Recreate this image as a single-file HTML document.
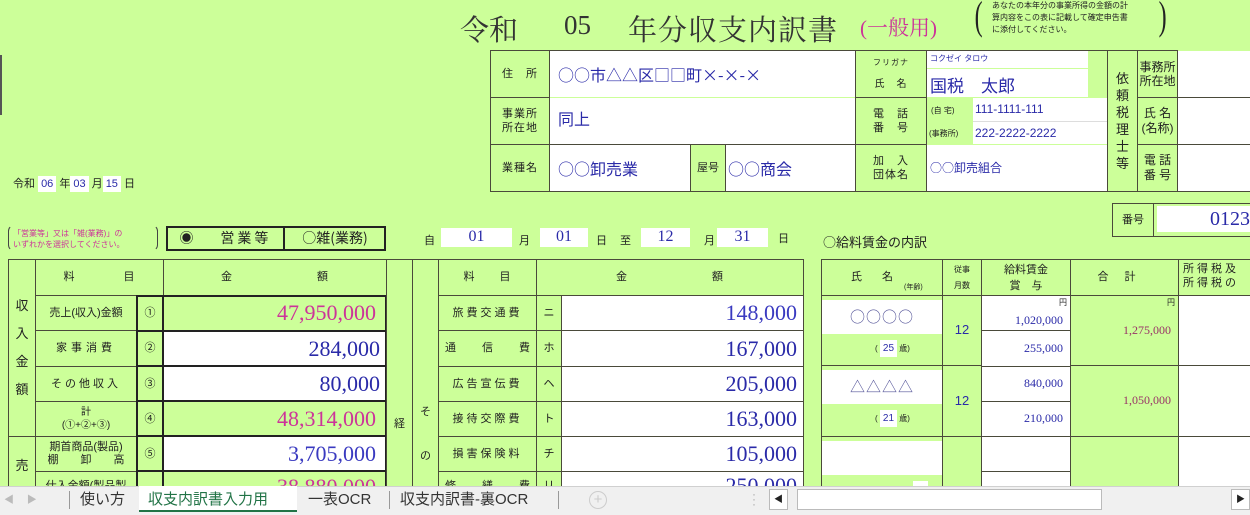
<!DOCTYPE html>
<html><head><meta charset="utf-8">
<style>
*{margin:0;padding:0;box-sizing:border-box}
body{width:1250px;height:515px;overflow:hidden;background:#ccff99;position:relative;font-family:"Liberation Sans","Noto Sans CJK JP",sans-serif;color:#222}
.a{position:absolute}
.c{position:absolute;display:flex;align-items:center;justify-content:center;text-align:center;line-height:1.15}
.b{border:1px solid #4a4a3a}
.w{background:#fff}
.s{font-size:11px}
.v{color:#2a2aa8}
.p{color:#cc3399}
.j{font-family:"Noto Sans CJK JP",sans-serif}
.n{font-family:"Liberation Serif",serif;font-size:22px;justify-content:flex-end;padding-right:6px}
.lbl{font-size:11px;letter-spacing:1px}
</style></head><body>
<div class="a" style="left:0;top:55px;width:2px;height:60px;background:#555"></div>
<!-- title -->
<div class="a" style="left:460px;top:8px;font-family:'Liberation Serif','Noto Serif CJK SC',serif;font-size:29px;color:#333;white-space:nowrap">令和</div>
<div class="a" style="left:564px;top:10px;font-family:'Liberation Serif',serif;font-size:27px;color:#333">05</div>
<div class="a" style="left:628px;top:8px;font-family:'Liberation Serif','Noto Serif CJK SC',serif;font-size:29px;color:#333;letter-spacing:1px;white-space:nowrap">年分収支内訳書</div>
<div class="a p" style="left:860px;top:12px;font-family:'Liberation Serif','Noto Serif CJK SC',serif;font-size:21px;white-space:nowrap">(一般用)</div>
<div class="a" style="left:972px;top:-8px;font-size:40px;transform:scaleX(0.6);color:#222;font-family:'Liberation Serif',serif">(</div>
<div class="a" style="left:1156px;top:-8px;font-size:40px;transform:scaleX(0.6);color:#222;font-family:'Liberation Serif',serif">)</div>
<div class="a" style="left:992px;top:0px;font-size:8px;line-height:12px;color:#222;white-space:nowrap">あなたの本年分の事業所得の金額の計<br>算内容をこの表に記載して確定申告書<br>に添付してください。</div>

<!-- top table -->
<div class="c b lbl" style="left:490px;top:50px;width:60px;height:48px">住　所</div>
<div class="a w" style="left:550px;top:51px;width:306px;height:46px"></div>
<div class="c v j" style="left:558px;top:51px;height:46px;font-size:16px">○○市△△区□□町×-×-×</div>
<div class="c b lbl" style="left:490px;top:97px;width:60px;height:48px;line-height:14px">事業所<br>所在地</div>
<div class="a w" style="left:550px;top:98px;width:306px;height:46px"></div>
<div class="c v" style="left:558px;top:98px;height:46px;font-size:16px">同上</div>
<div class="c b lbl" style="left:490px;top:144px;width:60px;height:48px">業種名</div>
<div class="a w b" style="left:549px;top:144px;width:142px;height:48px"></div>
<div class="c v j" style="left:558px;top:145px;height:46px;font-size:16px">○○卸売業</div>
<div class="c b s" style="left:690px;top:144px;width:36px;height:48px">屋号</div>
<div class="a w b" style="left:725px;top:144px;width:131px;height:48px"></div>
<div class="c v j" style="left:728px;top:145px;height:46px;font-size:16px">○○商会</div>
<div class="a b" style="left:490px;top:50px;width:366px;height:142px;border-width:1px"></div>

<div class="c b lbl" style="left:855px;top:50px;width:72px;height:48px;flex-direction:column;font-size:10px;line-height:22px"><span style="font-size:8px">フリガナ</span>氏　名</div>
<div class="a w" style="left:927px;top:51px;width:161px;height:46px"></div>
<div class="a" style="left:927px;top:68px;width:161px;height:1px;background:#ccff99"></div>
<div class="a v" style="left:930px;top:53px;font-size:8px">コクゼイ タロウ</div>
<div class="a v" style="left:930px;top:72px;font-size:17px">国税　太郎</div>
<div class="c b lbl" style="left:855px;top:97px;width:72px;height:48px;line-height:14px">電　話<br>番　号</div>
<div class="a w" style="left:927px;top:98px;width:181px;height:46px"></div>
<div class="a" style="left:927px;top:98px;width:46px;height:46px;background:#ccff99"></div>
<div class="a" style="left:973px;top:121px;width:135px;height:1px;background:#ddd"></div>
<div class="a" style="left:931px;top:105px;font-size:8px">(自 宅)</div>
<div class="a" style="left:929px;top:128px;font-size:8px">(事務所)</div>
<div class="a v" style="left:975px;top:102px;font-size:12px">111-1111-111</div>
<div class="a v" style="left:975px;top:126px;font-size:12px">222-2222-2222</div>
<div class="c b lbl" style="left:855px;top:144px;width:72px;height:48px;line-height:14px">加　入<br>団体名</div>
<div class="a w" style="left:927px;top:145px;width:181px;height:46px"></div>
<div class="c v j" style="left:930px;top:145px;height:46px;font-size:12px">○○卸売組合</div>
<div class="a b" style="left:855px;top:50px;width:253px;height:142px"></div>
<div class="c b" style="left:1107px;top:50px;width:31px;height:142px;font-size:13px;line-height:17px">依<br>頼<br>税<br>理<br>士<br>等</div>
<div class="c b s" style="left:1137px;top:50px;width:41px;height:48px;line-height:14px;font-size:12px">事務所<br>所在地</div>
<div class="c b s" style="left:1137px;top:97px;width:41px;height:48px;line-height:15px;font-size:12px">氏 名<br>(名称)</div>
<div class="c b s" style="left:1137px;top:144px;width:41px;height:48px;line-height:15px;font-size:12px">電 話<br>番 号</div>
<div class="a w" style="left:1178px;top:51px;width:72px;height:140px"></div>
<div class="a" style="left:1178px;top:97px;width:72px;height:1px;background:#4a4a3a"></div>
<div class="a" style="left:1178px;top:144px;width:72px;height:1px;background:#4a4a3a"></div>
<div class="a" style="left:1108px;top:191px;width:142px;height:1px;background:#4a4a3a"></div>

<!-- date -->
<div class="a" style="left:13px;top:175px;font-size:11px;white-space:nowrap">令和 <span class="w v" style="padding:2px 3px">06</span> 年<span class="w v" style="padding:2px 3px">03</span> 月<span class="w v" style="padding:2px 3px">15</span> 日</div>

<!-- number -->
<div class="c b s" style="left:1112px;top:203px;width:42px;height:34px">番号</div>
<div class="a b" style="left:1112px;top:203px;width:140px;height:34px"></div>
<div class="c w v" style="left:1157px;top:206px;width:93px;height:26px;font-family:'Liberation Serif',serif;font-size:20px;justify-content:flex-end">0123</div>

<!-- radio row -->
<div class="a" style="left:8px;top:225px;width:150px;height:26px;border:1px solid #444;border-radius:6px;border-top-color:transparent;border-bottom-color:transparent"></div>
<div class="a p" style="left:13px;top:228px;font-size:8px;line-height:11px;white-space:nowrap">「営業等」又は「雑(業務)」の<br>いずれかを選択してください。</div>
<div class="a" style="left:166px;top:226px;width:220px;height:25px;border:2px solid #222"></div>
<div class="a" style="left:283px;top:226px;width:2px;height:25px;background:#222"></div>
<div class="c" style="left:168px;top:227px;width:115px;height:23px;font-size:14px;letter-spacing:3px">◉ 　営業等</div>
<div class="c j" style="left:285px;top:227px;width:100px;height:23px;font-size:14px">○雑(業務)</div>
<div class="a s" style="left:424px;top:232px">自</div>
<div class="c w v" style="left:441px;top:228px;width:71px;height:19px;font-family:'Liberation Serif',serif;font-size:16px">01</div>
<div class="a s" style="left:519px;top:232px">月</div>
<div class="c w v" style="left:540px;top:228px;width:48px;height:19px;font-family:'Liberation Serif',serif;font-size:16px">01</div>
<div class="a s" style="left:596px;top:232px">日</div>
<div class="a s" style="left:620px;top:232px">至</div>
<div class="c w v" style="left:641px;top:228px;width:49px;height:19px;font-family:'Liberation Serif',serif;font-size:16px">12</div>
<div class="a s" style="left:704px;top:232px">月</div>
<div class="c w v" style="left:717px;top:228px;width:51px;height:19px;font-family:'Liberation Serif',serif;font-size:16px">31</div>
<div class="a s" style="left:778px;top:230px">日</div>
<div class="a j" style="left:823px;top:232px;font-size:13px">○給料賃金の内訳</div>

<!-- left main table -->
<div class="c b" style="left:8px;top:259px;width:28px;height:178px;font-size:13px;line-height:28px">収<br>入<br>金<br>額</div>
<div class="c b" style="left:8px;top:436px;width:28px;height:60px;font-size:13px">売</div>
<div class="c b lbl" style="left:35px;top:259px;width:129px;height:37px;word-spacing:40px">料　　　　目</div>
<div class="c b lbl" style="left:163px;top:259px;width:224px;height:37px">金　　　　　　　額</div>
<div class="c b s" style="left:35px;top:295px;width:102px;height:36px">売上(収入)金額</div>
<div class="c b s" style="left:35px;top:330px;width:102px;height:37px;letter-spacing:4px">家事消費</div>
<div class="c b s" style="left:35px;top:366px;width:102px;height:36px;letter-spacing:3px">その他収入</div>
<div class="c b s" style="left:35px;top:401px;width:102px;height:36px;line-height:13px;font-size:10px">計<br>(①+②+③)</div>
<div class="c b s" style="left:35px;top:436px;width:102px;height:36px;line-height:13px">期首商品(製品)<br>棚　　卸　　高</div>
<div class="c b s" style="left:35px;top:471px;width:102px;height:30px">仕入金額(製品製</div>
<div class="c s" style="left:137px;top:296px;width:26px;height:34px">①</div>
<div class="c s" style="left:137px;top:331px;width:26px;height:35px">②</div>
<div class="c s" style="left:137px;top:367px;width:26px;height:34px">③</div>
<div class="c s" style="left:137px;top:402px;width:26px;height:34px">④</div>
<div class="c s" style="left:137px;top:437px;width:26px;height:34px">⑤</div>
<div class="c n p" style="left:163px;top:296px;width:223px;height:34px;padding-right:10px">47,950,000</div>
<div class="c n v w" style="left:163px;top:331px;width:223px;height:35px">284,000</div>
<div class="c n v w" style="left:163px;top:367px;width:223px;height:34px">80,000</div>
<div class="c n p" style="left:163px;top:402px;width:223px;height:34px;padding-right:10px">48,314,000</div>
<div class="c n v w" style="left:163px;top:437px;width:223px;height:34px;color:#3a3ac0;padding-right:10px">3,705,000</div>
<div class="c n p" style="left:163px;top:472px;width:223px;height:30px;padding-right:10px">38,880,000</div>
<div class="a" style="left:136px;top:295px;width:251px;height:210px;border:2px solid #222;border-bottom:none"></div>
<div class="a" style="left:162px;top:295px;width:2px;height:210px;background:#222"></div>
<div class="a" style="left:136px;top:330px;width:251px;height:2px;background:#222"></div>
<div class="a" style="left:136px;top:365px;width:251px;height:2px;background:#222"></div>
<div class="a" style="left:136px;top:400px;width:251px;height:2px;background:#222"></div>
<div class="a" style="left:136px;top:435px;width:251px;height:2px;background:#222"></div>
<div class="a" style="left:136px;top:470px;width:251px;height:2px;background:#222"></div>

<div class="c b s" style="left:386px;top:259px;width:27px;height:250px;padding-top:80px">経</div>
<div class="c b s" style="left:412px;top:259px;width:27px;height:250px;flex-direction:column;line-height:44px;padding-top:100px">そ<br>の</div>
<div class="c b lbl" style="left:438px;top:259px;width:99px;height:37px">料　　目</div>
<div class="c b lbl" style="left:536px;top:259px;width:268px;height:37px">金　　　　　　　額</div>
<div class="c b s" style="left:438px;top:295px;width:99px;height:36px;letter-spacing:3px">旅費交通費</div>
<div class="c b s" style="left:438px;top:330px;width:99px;height:37px;justify-content:space-between;padding:0 6px"><span>通</span><span>信</span><span>費</span></div>
<div class="c b s" style="left:438px;top:366px;width:99px;height:36px;letter-spacing:3px">広告宣伝費</div>
<div class="c b s" style="left:438px;top:401px;width:99px;height:36px;letter-spacing:3px">接待交際費</div>
<div class="c b s" style="left:438px;top:436px;width:99px;height:36px;letter-spacing:3px">損害保険料</div>
<div class="c b s" style="left:438px;top:471px;width:99px;height:30px;justify-content:space-between;padding:0 6px"><span>修</span><span>繕</span><span>費</span></div>
<div class="c b s" style="left:536px;top:295px;width:26px;height:36px">ニ</div>
<div class="c b s" style="left:536px;top:330px;width:26px;height:37px">ホ</div>
<div class="c b s" style="left:536px;top:366px;width:26px;height:36px">ヘ</div>
<div class="c b s" style="left:536px;top:401px;width:26px;height:36px">ト</div>
<div class="c b s" style="left:536px;top:436px;width:26px;height:36px">チ</div>
<div class="c b s" style="left:536px;top:471px;width:26px;height:30px">リ</div>
<div class="c b n v w" style="left:561px;top:295px;width:243px;height:36px;color:#3a3ac0">148,000</div>
<div class="c b n v w" style="left:561px;top:330px;width:243px;height:37px">167,000</div>
<div class="c b n v w" style="left:561px;top:366px;width:243px;height:36px">205,000</div>
<div class="c b n v w" style="left:561px;top:401px;width:243px;height:36px">163,000</div>
<div class="c b n v w" style="left:561px;top:436px;width:243px;height:36px">105,000</div>
<div class="c b n v w" style="left:561px;top:471px;width:243px;height:30px">250,000</div>

<!-- salary table -->
<div class="c b s" style="left:821px;top:259px;width:122px;height:37px;letter-spacing:20px">氏名</div>
<div class="a" style="left:904px;top:282px;font-size:7px">(年齢)</div>
<div class="c b" style="left:942px;top:259px;width:40px;height:37px;font-size:8px;line-height:16px">従事<br>月数</div>
<div class="c b s" style="left:981px;top:259px;width:90px;height:37px;line-height:16px">給料賃金<br>賞　与</div>
<div class="c b s" style="left:1070px;top:259px;width:109px;height:37px;letter-spacing:16px">合計</div>
<div class="a b" style="left:1178px;top:259px;width:80px;height:37px"></div>
<div class="a s" style="left:1183px;top:262px;line-height:14px;letter-spacing:3px;white-space:nowrap">所得税及<br>所得税の</div>

<!-- person rows -->
<div class="a b" style="left:821px;top:295px;width:122px;height:71px"></div>
<div class="c w v j" style="left:822px;top:300px;width:120px;height:34px;font-size:15px;letter-spacing:1px;color:#555599">○○○○</div>
<div class="a" style="left:875px;top:343px;font-size:8px;white-space:nowrap">( <span class="w v" style="padding:3px 3px;font-size:10px">25</span> 歳)</div>
<div class="a b" style="left:821px;top:365px;width:122px;height:72px"></div>
<div class="c w v j" style="left:822px;top:370px;width:120px;height:34px;font-size:15px;letter-spacing:1px;color:#555599">△△△△</div>
<div class="a" style="left:875px;top:413px;font-size:8px;white-space:nowrap">( <span class="w v" style="padding:3px 3px;font-size:10px">21</span> 歳)</div>
<div class="a b" style="left:821px;top:436px;width:122px;height:70px"></div>
<div class="a w" style="left:822px;top:441px;width:120px;height:34px"></div>
<div class="a w" style="left:913px;top:481px;width:15px;height:20px"></div>

<div class="c b v" style="left:942px;top:295px;width:40px;height:71px;font-size:13px">12</div>
<div class="c b v" style="left:942px;top:365px;width:40px;height:72px;font-size:13px">12</div>
<div class="a b" style="left:942px;top:436px;width:40px;height:70px"></div>

<div class="c b w v" style="left:981px;top:295px;width:90px;height:36px;font-size:12px;justify-content:flex-end;align-items:flex-end;padding:0 7px 2px 0;font-family:'Liberation Serif',serif">1,020,000</div>
<div class="a" style="left:1059px;top:297px;font-size:8px">円</div>
<div class="c b w v" style="left:981px;top:330px;width:90px;height:37px;font-size:12px;justify-content:flex-end;padding-right:7px;font-family:'Liberation Serif',serif">255,000</div>
<div class="c b w v" style="left:981px;top:366px;width:90px;height:36px;font-size:12px;justify-content:flex-end;padding-right:7px;font-family:'Liberation Serif',serif">840,000</div>
<div class="c b w v" style="left:981px;top:401px;width:90px;height:36px;font-size:12px;justify-content:flex-end;padding-right:7px;font-family:'Liberation Serif',serif">210,000</div>
<div class="a b w" style="left:981px;top:436px;width:90px;height:36px"></div>
<div class="a b w" style="left:981px;top:471px;width:90px;height:30px"></div>

<div class="c b" style="left:1070px;top:295px;width:109px;height:71px;font-size:12px;color:#993366;justify-content:flex-end;padding-right:7px;font-family:'Liberation Serif',serif">1,275,000</div>
<div class="a" style="left:1167px;top:297px;font-size:8px">円</div>
<div class="c b" style="left:1070px;top:365px;width:109px;height:72px;font-size:12px;color:#993366;justify-content:flex-end;padding-right:7px;font-family:'Liberation Serif',serif">1,050,000</div>
<div class="a b" style="left:1070px;top:436px;width:109px;height:70px"></div>
<div class="a b w" style="left:1178px;top:295px;width:80px;height:71px"></div>
<div class="a b w" style="left:1178px;top:365px;width:80px;height:72px"></div>
<div class="a b w" style="left:1178px;top:436px;width:80px;height:70px"></div>

<!-- tab bar -->
<div class="a" style="left:0;top:486px;width:1250px;height:29px;background:#f0f0f0;border-top:1px solid #d0d0d0"></div>
<div class="a" style="left:4px;top:491px;font-size:10px;color:#bbb">◀　 ▶</div>
<div class="a" style="left:69px;top:491px;width:1px;height:18px;background:#999"></div>
<div class="a" style="left:80px;top:488px;font-size:15px;color:#333">使い方</div>
<div class="a" style="left:139px;top:486px;width:158px;height:26px;background:#fff;border-bottom:2px solid #217346"></div>
<div class="a" style="left:148px;top:488px;font-size:15px;color:#217346">収支内訳書入力用</div>
<div class="a" style="left:308px;top:488px;font-size:15px;color:#333">一表OCR</div>
<div class="a" style="left:389px;top:491px;width:1px;height:18px;background:#999"></div>
<div class="a" style="left:400px;top:488px;font-size:15px;color:#333">収支内訳書-裏OCR</div>
<div class="a" style="left:558px;top:491px;width:1px;height:18px;background:#999"></div>
<div class="a" style="left:589px;top:491px;width:18px;height:18px;border:1px solid #ccc;border-radius:50%;color:#ccc;font-size:15px;line-height:15px;text-align:center">+</div>
<div class="a" style="left:752px;top:492px;font-size:12px;color:#aaa;line-height:5px">·<br>·<br>·</div>
<div class="c" style="left:769px;top:489px;width:19px;height:21px;background:#fff;border:1px solid #bbb;font-size:9px">◀</div>
<div class="a" style="left:797px;top:489px;width:305px;height:21px;background:#fff;border:1px solid #bbb"></div>
<div class="c" style="left:1231px;top:489px;width:19px;height:21px;background:#fff;border:1px solid #bbb;font-size:9px">▶</div>
</body></html>
